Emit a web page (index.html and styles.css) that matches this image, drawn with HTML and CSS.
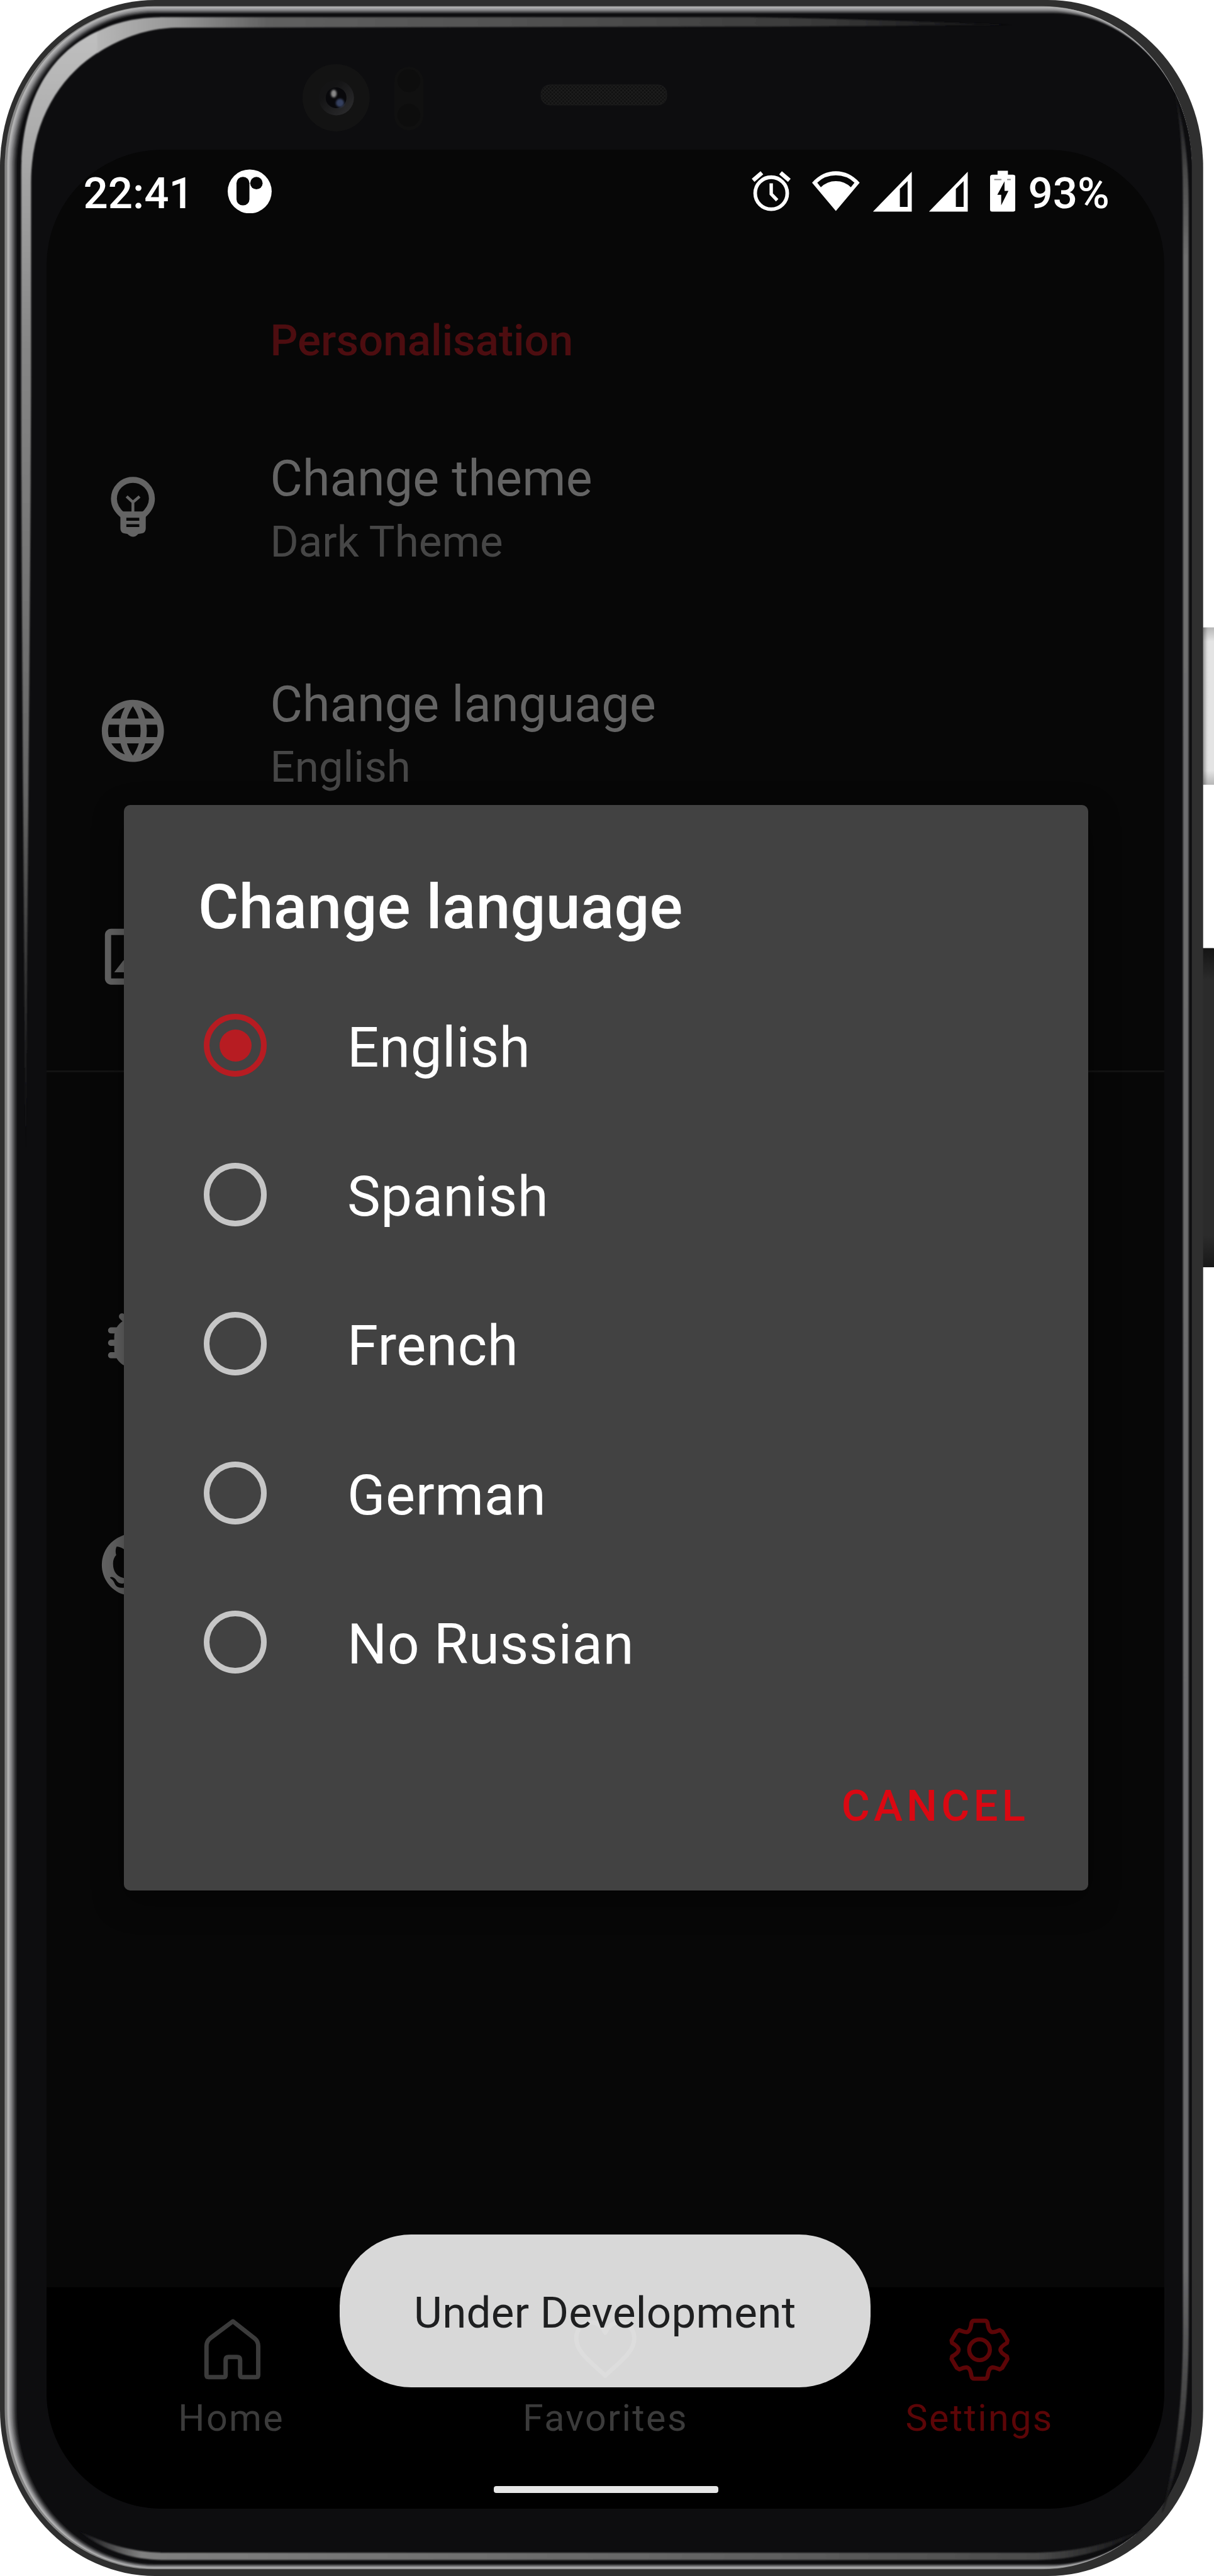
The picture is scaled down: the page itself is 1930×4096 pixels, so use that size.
FILE: index.html
```html
<!DOCTYPE html>
<html lang="en">
<head>
<meta charset="utf-8">
<title>Settings – Change language</title>
<link rel="stylesheet" href="styles.css">
</head>
<body>
<div class="phone">
  <svg class="frame" viewBox="0 0 2346 4980" preserveAspectRatio="none" aria-hidden="true">
    <defs>
      <linearGradient id="btnLight" x1="0" x2="1" y1="0" y2="0"><stop offset="0" stop-color="#9c9c9c"/><stop offset=".35" stop-color="#dcdcdc"/><stop offset=".5" stop-color="#e4e4e4"/></linearGradient>
      <linearGradient id="btnShade" x1="0" x2="0" y1="0" y2="1"><stop offset="0" stop-color="#000" stop-opacity=".2"/><stop offset=".09" stop-color="#000" stop-opacity="0"/><stop offset=".91" stop-color="#000" stop-opacity="0"/><stop offset="1" stop-color="#000" stop-opacity=".2"/></linearGradient>
      <linearGradient id="btnDark" x1="0" x2="0" y1="0" y2="1"><stop offset="0" stop-color="#141414"/><stop offset=".1" stop-color="#2b2b2b"/><stop offset=".9" stop-color="#2b2b2b"/><stop offset="1" stop-color="#181818"/></linearGradient>
      <linearGradient id="shineLeft" gradientUnits="userSpaceOnUse" x1="0" x2="0" y1="60" y2="2230"><stop offset="0" stop-color="#c0c0c0"/><stop offset=".11" stop-color="#a8a8a8"/><stop offset=".28" stop-color="#868686"/><stop offset=".68" stop-color="#666"/><stop offset=".85" stop-color="#333"/><stop offset="1" stop-color="#0d0d0f"/></linearGradient>
      <linearGradient id="shineTop" gradientUnits="userSpaceOnUse" x1="180" x2="1960" y1="0" y2="0"><stop offset="0" stop-color="#b8b8b8"/><stop offset=".09" stop-color="#969696"/><stop offset=".19" stop-color="#606060"/><stop offset=".56" stop-color="#4c4c4c"/><stop offset=".8" stop-color="#383838"/><stop offset="1" stop-color="#0d0d0f"/></linearGradient>
      <linearGradient id="shineRight" gradientUnits="userSpaceOnUse" x1="0" x2="0" y1="170" y2="4860"><stop offset="0" stop-color="#0d0d0f"/><stop offset=".02" stop-color="#2c2c2e"/><stop offset=".035" stop-color="#4a4a4a"/><stop offset=".07" stop-color="#707070"/><stop offset=".9" stop-color="#6a6a6c"/><stop offset=".96" stop-color="#404040"/><stop offset="1" stop-color="#0d0d0f"/></linearGradient>
      <linearGradient id="shineBottom" gradientUnits="userSpaceOnUse" x1="150" x2="2210" y1="0" y2="0"><stop offset="0" stop-color="#0d0d0f"/><stop offset=".06" stop-color="#808080"/><stop offset=".55" stop-color="#666"/><stop offset=".9" stop-color="#4c4c4c"/><stop offset="1" stop-color="#0d0d0f"/></linearGradient>
      <linearGradient id="lens" x1="0" x2="1" y1="0" y2="1"><stop offset=".3" stop-color="#141415"/><stop offset="1" stop-color="#2e2e30"/></linearGradient>
      <pattern id="mesh" width="7" height="7" patternUnits="userSpaceOnUse"><rect width="7" height="7" fill="#101010"/><path d="M0 0L7 7M7 0L0 7" stroke="#202020" stroke-width="1.2"/></pattern>
      <filter id="soft" x="-20%" y="-20%" width="140%" height="140%"><feGaussianBlur stdDeviation="1.3"/></filter>
      <filter id="glow" x="-80%" y="-80%" width="260%" height="260%"><feGaussianBlur stdDeviation="2.2"/></filter>
    </defs>
    <!-- side buttons -->
    <rect x="2315" y="1213" width="34" height="304" rx="4" fill="#e3e3e3"/>
    <rect x="2325" y="1213" width="22" height="304" fill="url(#btnLight)"/>
    <rect x="2325" y="1213" width="22" height="304" fill="url(#btnShade)"/>
    <rect x="2315" y="1833" width="34" height="617" rx="5" fill="url(#btnDark)"/>
    <!-- metal body, shaded rim -->
    <rect x="0" y="0" width="2325" height="4980" rx="300" ry="322" fill="#2f2f2f"/>
    <rect x="9" y="12" width="2294" height="4955" rx="289" ry="311" fill="#858585"/>
    <rect x="14" y="13" width="2289" height="4952" rx="284" ry="309" fill="#b2b2b2"/>
    <rect x="17" y="15" width="2286" height="4949" rx="282" ry="307" fill="#a4a4a6"/>
    <rect x="19" y="17" width="2284" height="4946" rx="280" ry="305" fill="#929294"/>
    <rect x="21" y="19" width="2282" height="4943" rx="278" ry="303" fill="#808082"/>
    <rect x="23" y="20.500" width="2280" height="4940.500" rx="276" ry="301" fill="#6c6c6e"/>
    <rect x="25" y="22" width="2278" height="4938" rx="274" ry="299" fill="#565658"/>
    <rect x="27" y="23.300" width="2276" height="4935.700" rx="272" ry="298" fill="#404042"/>
    <rect x="29" y="24.500" width="2274" height="4933.500" rx="270" ry="297" fill="#2c2c2e"/>
    <rect x="31" y="25.500" width="2272" height="4931.500" rx="269" ry="296" fill="#1c1c1e"/>
    <rect x="33" y="27" width="2270" height="4929" rx="268" ry="295" fill="#0d0d0f"/>
    <!-- glass reflections -->
    <g filter="url(#soft)">
      <path fill="url(#shineLeft)" d="M50 2230C45 1700 41 1000 41 700V333C41 190 100 100 190 60V101C120 145 60 230 60 353V700C60 1000 53 1700 50 2230Z"/>
      <path fill="url(#shineTop)" d="M188 61C225 42 265 33 320 33H1450C1600 35 1850 44 1960 48C1800 50 1600 51 1400 51.500L340 53.500C280 55 230 76 188 103Z"/>
      <path fill="url(#shineRight)" d="M2268 170C2288 240 2297 300 2297 400V4500C2297 4650 2285 4760 2245 4860C2272 4750 2286 4650 2286 4500V400C2286 300 2282 240 2268 170Z"/>
      <path fill="url(#shineBottom)" d="M150 4892C200 4915 250 4935 320 4935H2000C2080 4933 2140 4920 2210 4888C2150 4930 2080 4949 2000 4949H320C250 4949 200 4930 150 4892Z"/>
    </g>
    <!-- camera, sensors, earpiece -->
    <circle cx="649.500" cy="189" r="65" fill="#131313"/>
    <circle cx="650" cy="189" r="34" fill="url(#lens)"/>
    <circle cx="649.500" cy="189" r="20" fill="#08080b"/>
    <g filter="url(#glow)"><ellipse cx="645" cy="181" rx="5.500" ry="7.500" fill="#8a8a8a"/><ellipse cx="657" cy="199" rx="8" ry="8" fill="#35405f"/></g>
    <rect x="762" y="129" width="56" height="123" rx="28" fill="#101010"/>
    <circle cx="790" cy="156" r="22" fill="#0d0d0d"/><circle cx="790" cy="223" r="22" fill="#0d0d0d"/>
    <rect x="1045.500" y="164" width="243" height="39" rx="17" fill="url(#mesh)" stroke="#1c1c1c" stroke-width="1.200"/>
  </svg>

  <main class="screen">
    <header class="status">
      <span class="clock">22:41</span>
      <svg class="st-app" viewBox="440 327 85 86"><circle cx="482.500" cy="370" r="42.500" fill="#fff"/><rect x="457" y="342" width="25" height="55" rx="12" fill="#070707"/><circle cx="495.500" cy="354" r="12" fill="#070707"/></svg>
      <svg class="st-alarm" viewBox="1451 327 78 86"><g fill="none" stroke="#fff"><circle cx="1490" cy="373.500" r="31" stroke-width="7"/><path d="M1490 354.500V375L1501.500 387" stroke-width="6.500"/><path d="M1455 348.500L1472 334M1525 348.500L1508 334" stroke-width="8"/></g></svg>
      <svg class="st-wifi" viewBox="1570 327 92 86"><path fill="#fff" fill-rule="evenodd" d="M1616 408L1570 353Q1590 331 1616 331T1662 353ZM1587 362Q1599 350 1616 350T1645 362L1652 353Q1637 339 1616 339T1580 353Z"/></svg>
      <svg class="st-sig" viewBox="1686 327 77 86"><path fill="#fff" fill-rule="evenodd" d="M1687 409L1762 332V409ZM1739 400H1754V350L1739 365Z"/></svg>
      <svg class="st-sig2" viewBox="1686 327 77 86"><path fill="#fff" fill-rule="evenodd" d="M1687 409L1762 332V409ZM1739 400H1754V350L1739 365Z"/></svg>
      <svg class="st-batt" viewBox="1913 327 49 86"><path fill="#fff" d="M1927.500 330H1947.500V337.500H1957Q1962 337.500 1962 342V405Q1962 409 1958 409H1917Q1913 409 1913 405V342Q1913 337.500 1918 337.500H1927.500Z"/><path fill="#070707" d="M1941 350.500L1927 376.500H1934.500V397L1948.500 369H1941Z"/><path d="M1921 347H1935M1946 347H1953" stroke="#8a8a8a" stroke-width="2.500"/></svg>
      <span class="level">93%</span>
    </header>

    <section class="list">
      <h2 class="category">Personalisation</h2>
      <div class="row">
        <svg class="icon" viewBox="184.600 905.500 144 144"><path fill="none" stroke="currentColor" stroke-width="11.500" d="M238.500 997C228 989 220 979 220 964A36.700 36.700 0 0 1 293.400 964C293.400 979 285 989 275 997"/><path fill="currentColor" fill-rule="evenodd" d="M230 988.500H284L281.500 1000V1021Q281.500 1030 273 1031L267 1032Q262 1037.500 257 1037.500T246 1032L241 1031Q232.500 1030 232.500 1021V1000ZM244 1000.500V1006.500H269V1000.500ZM244 1013V1018.500H269V1013Z"/><path fill="none" stroke="currentColor" stroke-width="5.500" d="M244.500 959.500L256.700 970.500L269.500 959.500M256.700 969V992"/></svg>
        <div class="texts"><div class="title">Change theme</div><div class="sub">Dark Theme</div></div>
      </div>
      <div class="row">
        <svg class="icon" viewBox="0 0 24 24"><path fill="currentColor" d="M11.990 2C6.470 2 2 6.480 2 12s4.470 10 9.990 10C17.520 22 22 17.520 22 12S17.520 2 11.990 2zm6.930 6h-2.950c-.32-1.250-.78-2.450-1.380-3.560 1.840.63 3.370 1.910 4.330 3.560zM12 4.040c.83 1.200 1.480 2.530 1.910 3.960h-3.820c.43-1.430 1.080-2.760 1.910-3.960zM4.260 14C4.100 13.360 4 12.690 4 12s.1-1.360.26-2h3.380c-.08.66-.14 1.320-.14 2 0 .68.06 1.340.14 2H4.260zm.82 2h2.950c.32 1.250.78 2.450 1.380 3.560-1.840-.63-3.370-1.900-4.330-3.560zm2.950-8H5.080c.96-1.660 2.490-2.930 4.330-3.560C8.810 5.550 8.350 6.750 8.030 8zM12 19.960c-.83-1.200-1.480-2.530-1.910-3.960h3.820c-.43 1.430-1.080 2.760-1.910 3.960zM14.340 14H9.660c-.09-.66-.16-1.320-.16-2 0-.68.07-1.350.16-2h4.680c.09.65.16 1.320.16 2 0 .68-.07 1.340-.16 2zm.25 5.560c.6-1.110 1.060-2.310 1.380-3.560h2.950c-.96 1.650-2.490 2.930-4.330 3.560zM16.360 14c.08-.66.14-1.320.14-2 0-.68-.06-1.340-.14-2h3.380c.16.64.26 1.310.26 2s-.1 1.360-.26 2h-3.380z"/></svg>
        <div class="texts"><div class="title">Change language</div><div class="sub">English</div></div>
      </div>
      <div class="row">
        <svg class="icon" viewBox="0 0 24 24"><path fill="currentColor" d="M19 5v14H5V5h14m0-2H5c-1.100 0-2 .9-2 2v14c0 1.100.9 2 2 2h14c1.100 0 2-.9 2-2V5c0-1.100-.9-2-2-2zm-4.860 8.860l-3 3.870L9 13.140 6 17h12l-3.860-5.140z"/></svg>
      </div>
      <hr class="divider">
      <div class="row">
        <svg class="icon" viewBox="0 0 24 24"><g fill="none" stroke="currentColor" stroke-width="2" stroke-linecap="round"><path d="M5 9H19M5 13H19M5 17H19M8.500 4.500L10.500 6.500M15.500 4.500L13.500 6.500"/></g><path fill="currentColor" d="M12 5C9.800 5 7.800 6.300 6.810 8 6.300 8.900 6 10 6 11V15C6 18.400 8.700 21 12 21S18 18.400 18 15V11C18 7.600 15.300 5 12 5Z"/></svg>
      </div>
      <div class="row">
        <svg class="icon" viewBox="0 0 24 24"><path fill="currentColor" d="M12 2A10 10 0 0 0 2 12C2 16.420 4.870 20.170 8.840 21.500C9.340 21.580 9.500 21.270 9.500 21C9.500 20.770 9.500 20.140 9.500 19.310C6.730 19.910 6.140 17.970 6.140 17.970C5.680 16.810 5.030 16.500 5.030 16.500C4.120 15.880 5.100 15.900 5.100 15.900C6.100 15.970 6.630 16.930 6.630 16.930C7.500 18.450 8.970 18 9.540 17.760C9.630 17.110 9.890 16.670 10.170 16.420C7.950 16.170 5.620 15.310 5.620 11.500C5.620 10.390 6 9.500 6.650 8.790C6.550 8.540 6.200 7.500 6.750 6.150C6.750 6.150 7.590 5.880 9.500 7.170C10.290 6.950 11.150 6.840 12 6.840C12.850 6.840 13.710 6.950 14.500 7.170C16.410 5.880 17.250 6.150 17.250 6.150C17.800 7.500 17.450 8.540 17.350 8.790C18 9.500 18.380 10.390 18.380 11.500C18.380 15.320 16.040 16.160 13.810 16.410C14.170 16.720 14.500 17.330 14.500 18.260V21C14.500 21.270 14.660 21.590 15.170 21.500C19.140 20.160 22 16.420 22 12A10 10 0 0 0 12 2Z"/></svg>
      </div>
    </section>

    <nav class="tabs">
      <div class="tab home">
        <svg class="tab-icon" viewBox="378 4470 144 144"><path fill="none" stroke="currentColor" stroke-width="8.500" stroke-linejoin="round" d="M450 4487L492 4520Q499 4526 499 4535V4591Q499 4595 495 4595H468Q464 4595 464 4591V4562Q464 4556 458 4556H442Q436 4556 436 4562V4591Q436 4595 432 4595H403Q399 4595 399 4591V4535Q399 4526 406 4520Z"/></svg>
        <span class="tab-label">Home</span>
      </div>
      <div class="tab">
        <svg class="tab-icon" viewBox="1098 4470 144 144"><path fill="none" stroke="currentColor" stroke-width="8.500" stroke-linejoin="round" d="M1170 4592C1140 4564 1114 4546 1114 4520C1114 4501 1127 4489 1143 4489C1155 4489 1165 4497 1170 4509C1175 4497 1185 4489 1197 4489C1213 4489 1226 4501 1226 4520C1226 4546 1200 4564 1170 4592Z"/></svg>
        <span class="tab-label">Favorites</span>
      </div>
      <div class="tab active">
        <svg class="tab-icon" viewBox="-72 -72 144 144"><g fill="none" stroke="currentColor" stroke-width="8" stroke-linejoin="round"><circle r="20"/><path d="M-11 -56H11Q15 -56 16 -49Q18 -35 25 -34Q30 -34 39 -38L44 -35L54 -18L53 -13C36 -3 36 3 53 13L54 18L44 35L39 38Q30 34 25 34Q18 35 16 49Q15 56 11 56H-11Q-15 56 -16 49Q-18 35 -25 34Q-30 34 -39 38L-44 35L-54 18L-53 13C-36 3 -36 -3 -53 -13L-54 -18L-44 -35L-39 -38Q-30 -34 -25 -34Q-18 -35 -16 -49Q-15 -56 -11 -56Z"/></g></svg>
        <span class="tab-label">Settings</span>
      </div>
    </nav>

    <section class="dialog" role="dialog">
      <h1 class="dialog-title">Change language</h1>
      <div class="options">
        <div class="option"><span class="radio checked"></span><span class="label">English</span></div>
        <div class="option"><span class="radio"></span><span class="label">Spanish</span></div>
        <div class="option"><span class="radio"></span><span class="label">French</span></div>
        <div class="option"><span class="radio"></span><span class="label">German</span></div>
        <div class="option"><span class="radio"></span><span class="label">No Russian</span></div>
      </div>
      <div class="cancel">CANCEL</div>
    </section>

    <div class="toast">Under Development</div>
    <div class="home-bar"></div>
  </main>
</div>
</body>
</html>
```
FILE: styles.css
```css
/* 1rem is one hundred design pixels */
html { font-size: 82.26px; overflow: hidden; }
* { box-sizing: border-box; }
body { margin: 0; background: #fff; font-family: Roboto, sans-serif; font-size: .84rem; }
h1, h2 { margin: 0; font-weight: 500; }
svg { display: block; flex: none; }

.phone { position: relative; width: 1930px; height: 4096px; padding: 2.895rem 0 0 .9rem; overflow: hidden; }
.frame { position: absolute; inset: 0; width: 1930px; height: 4096px; }
.screen {
  position: relative; display: flex; flex-direction: column;
  width: 21.6rem; height: 45.6rem; border-radius: 2.24rem;
  background: #070707; overflow: hidden;
}

/* status bar */
.status { display: flex; align-items: center; height: 1.69rem; padding-left: .71rem; color: #fff; font-weight: 500; flex: none; }
.status svg { height: .86rem; margin-top: -.09rem; }
.clock { width: 2.79rem; white-space: nowrap; }
.st-app { width: .85rem; }
.st-alarm { width: .78rem; margin-left: 9.26rem; }
.st-wifi { width: .92rem; margin-left: .41rem; }
.st-sig { width: .77rem; margin-left: .24rem; }
.st-sig2 { width: .77rem; margin-left: .31rem; }
.st-batt { width: .49rem; margin-left: .42rem; }
.level { margin-left: .25rem; }

/* preference list */
.list { flex: 1; min-height: 0; }
.category { margin: .993rem 0 0 4.32rem; height: 2.022rem; line-height: 2.022rem; font-size: .84rem; color: #4d0d10; }
.row { display: flex; align-items: center; height: 4.356rem; padding-left: .946rem; color: #646464; }
.icon { width: 1.44rem; height: 1.44rem; }
.texts { margin-left: 1.934rem; padding-top: .12rem; }
.title { font-size: .96rem; line-height: 1.28rem; letter-spacing: .003rem; }
.sub { font-size: .84rem; line-height: 1.15rem; color: #464646; }
.divider { margin: .02rem 0 2.99rem; height: .04rem; border: 0; background: #131313; }

/* bottom navigation */
.tabs { display: flex; height: 4.28rem; background: #000; flex: none; }
.tab { width: 7.2rem; padding-top: .49rem; display: flex; flex-direction: column; align-items: center; color: #3b3b3b; }
.tab-icon { width: 1.44rem; height: 1.44rem; }
.tab-label { margin-top: .17rem; font-size: .72rem; line-height: .84rem; letter-spacing: .029rem; }
.home .tab-label { padding-right: .06rem; }
.active { color: #5c0507; padding-left: .06rem; }

/* language dialog */
.dialog {
  position: absolute; left: 1.49rem; top: 12.67rem; width: 18.64rem; height: 20.98rem;
  padding-top: 1.224rem; border-radius: .12rem; background: #424242; color: #fff;
  box-shadow: 0 .2rem .6rem rgba(0, 0, 0, .4);
}
.dialog-title { margin-left: 1.44rem; font-size: 1.2rem; line-height: 1.5rem; letter-spacing: .003rem; }
.options { margin-top: .475rem; }
.option { display: flex; align-items: center; height: 2.884rem; padding-left: 1.55rem; }
.radio { width: 1.22rem; height: 1.22rem; border: .12rem solid #c6c6c6; border-radius: 50%; }
.radio.checked { border-color: #b71c22; padding: .19rem; }
.radio.checked::before { content: ""; display: block; height: 100%; border-radius: 50%; background: #b71c22; }
.label { margin-left: 1.55rem; padding-top: .09rem; font-size: 1.08rem; letter-spacing: .007rem; }
.cancel { margin: .975rem 1.14rem 0 0; text-align: right; font-weight: 500; line-height: 1.5rem; letter-spacing: .075rem; color: #da0812; }

.toast {
  position: absolute; left: 5.665rem; top: 40.3rem; width: 10.255rem; height: 2.95rem; padding-top: .045rem;
  border-radius: 1.38rem; background: rgba(237, 237, 237, .91); color: #1e1f20;
  text-align: center; line-height: 2.95rem; letter-spacing: .003rem;
}
.home-bar { position: absolute; left: 8.64rem; bottom: .31rem; width: 4.34rem; height: .125rem; border-radius: .05rem; background: #e6e6e6; }
```
